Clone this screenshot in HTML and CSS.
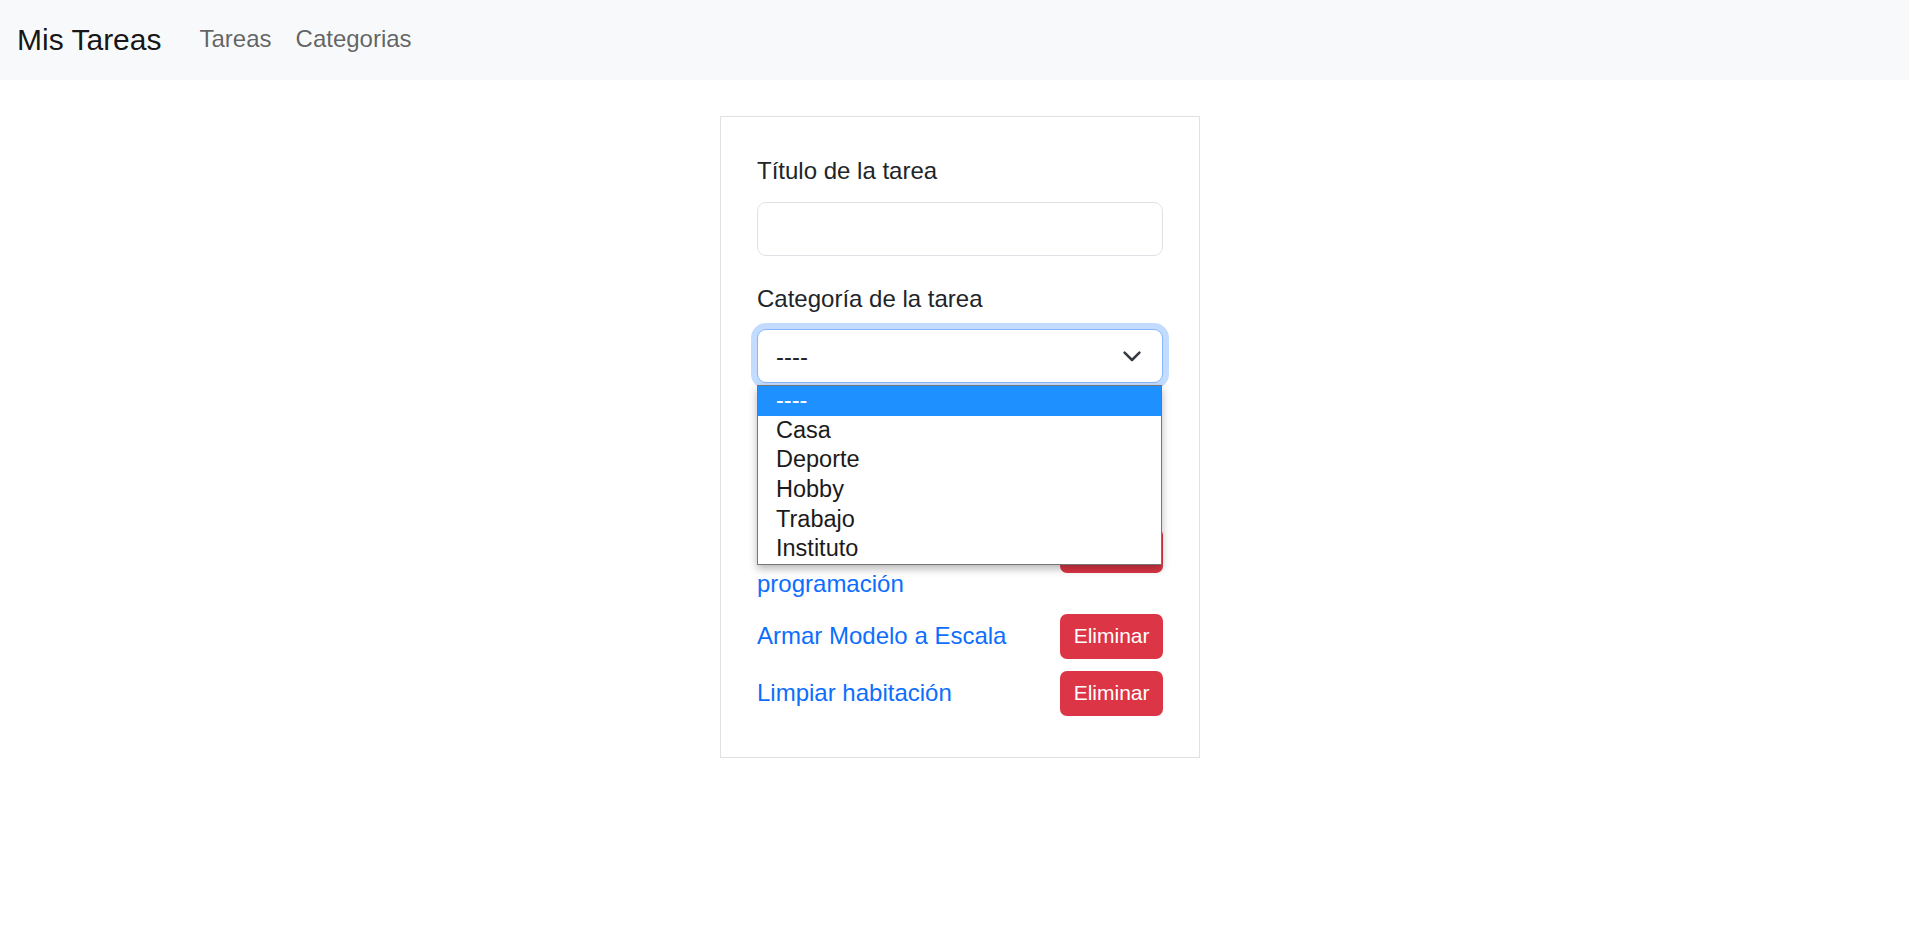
FILE: index.html
```html
<!DOCTYPE html>
<html lang="es">
<head>
<meta charset="utf-8">
<title>Mis Tareas</title>
<link rel="stylesheet" href="styles.css">
</head>
<body>
<nav class="navbar">
  <a class="brand" href="#">Mis Tareas</a>
  <ul class="nav-links">
    <li><a class="nav-link" href="#">Tareas</a></li>
    <li><a class="nav-link" href="#">Categorias</a></li>
  </ul>
</nav>
<main class="main">
  <section class="card">
    <form class="task-form">
      <div class="field field-title">
        <label class="field-label" for="titulo">Título de la tarea</label>
        <input class="form-control" id="titulo" type="text">
      </div>
      <div class="field">
        <label class="field-label" for="categoria">Categoría de la tarea</label>
        <div class="select-wrap">
          <select class="form-select" id="categoria">
            <option>----</option>
            <option>Casa</option>
            <option>Deporte</option>
            <option>Hobby</option>
            <option>Trabajo</option>
            <option>Instituto</option>
          </select>
          <svg class="chevron" width="18" height="11" viewBox="0 0 18 11" aria-hidden="true"><path d="M1.6 1.6 L9 9 L16.4 1.6" fill="none" stroke="#343a40" stroke-width="2.5" stroke-linecap="round" stroke-linejoin="round"/></svg>
          <ul class="dropdown">
            <li class="option selected">----</li>
            <li class="option">Casa</li>
            <li class="option">Deporte</li>
            <li class="option">Hobby</li>
            <li class="option">Trabajo</li>
            <li class="option">Instituto</li>
          </ul>
        </div>
      </div>
      <button class="btn btn-primary" type="button">Agregar</button>
    </form>
    <ul class="task-list">
      <li class="task">
        <a class="task-link" href="#">Aprender lenguaje de programación</a>
        <button class="btn btn-danger" type="button">Eliminar</button>
      </li>
      <li class="task">
        <a class="task-link" href="#">Armar Modelo a Escala</a>
        <button class="btn btn-danger" type="button">Eliminar</button>
      </li>
      <li class="task">
        <a class="task-link" href="#">Limpiar habitación</a>
        <button class="btn btn-danger" type="button">Eliminar</button>
      </li>
    </ul>
  </section>
</main>
</body>
</html>
```

FILE: styles.css
```css
* { box-sizing: border-box; }

html, body {
  margin: 0;
  padding: 0;
  background: #ffffff;
  font-family: "Liberation Sans", Arial, Helvetica, sans-serif;
  color: #212529;
}

.navbar {
  height: 80px;
  background: #f8f9fa;
  display: flex;
  align-items: center;
  padding: 0 17px;
}

.brand {
  font-size: 30px;
  line-height: 44px;
  color: rgba(0, 0, 0, 0.92);
  text-decoration: none;
  margin-right: 26px;
}

.nav-links {
  list-style: none;
  margin: 0 0 4px 0;
  padding: 0;
  display: flex;
}

.nav-link {
  display: block;
  font-size: 24px;
  line-height: 35px;
  padding: 0 12px;
  color: rgba(0, 0, 0, 0.62);
  text-decoration: none;
}

.main {
  display: flex;
  justify-content: center;
  padding: 36px 0 0 11px;
}

.card {
  width: 480px;
  border: 1px solid #dfe1e4;
  padding: 37px 36px 41px 36px;
  background: #fff;
}

.field-label {
  display: block;
  font-size: 24px;
  line-height: 34px;
  margin-bottom: 13px;
}

.field-title .field-label { margin-bottom: 14px; }

.field-title { margin-bottom: 26px; }

.form-control {
  display: block;
  width: 100%;
  height: 54px;
  border: 1px solid #dee2e6;
  border-radius: 9px;
  font-size: 24px;
  font-family: inherit;
  padding: 0 18px;
  background: #fff;
  outline: none;
}

.select-wrap {
  position: relative;
}

.form-select {
  display: block;
  width: 100%;
  height: 54px;
  -webkit-appearance: none;
  appearance: none;
  border: 1px solid #86b7fe;
  border-radius: 9px;
  box-shadow: 0 0 0 6px #c2dbfe;
  background: #fff;
  font-size: 24px;
  font-family: inherit;
  color: #212529;
  padding: 0 50px 0 18px;
  outline: none;
}

.chevron {
  position: absolute;
  right: 22px;
  top: 22px;
}

.dropdown {
  position: absolute;
  top: 56px;
  left: 0;
  width: 405px;
  margin: 0;
  padding: 0;
  list-style: none;
  background: #fff;
  border: 1px solid #767676;
  box-shadow: 0 4px 8px rgba(0, 0, 0, 0.28);
  z-index: 10;
}

.option {
  height: 29.67px;
  line-height: 29.67px;
  font-size: 23.5px;
  padding-left: 18px;
  color: #1b1b1b;
  white-space: nowrap;
}

.option.selected {
  background: #1e90ff;
  color: #fff;
}

.btn {
  font-family: inherit;
  border: none;
  cursor: pointer;
}

.btn-primary {
  margin-top: 23px;
  height: 45px;
  padding: 0 18px;
  font-size: 21px;
  border-radius: 7px;
  background: #0d6efd;
  color: #fff;
}

.task-list {
  list-style: none;
  margin: 77px 0 0 0;
  padding: 0;
}

.task {
  display: flex;
  justify-content: space-between;
  align-items: flex-start;
  gap: 12px;
  margin-bottom: 12px;
}

.task:last-child { margin-bottom: 0; }

.task-link {
  font-size: 24px;
  line-height: 34.3px;
  padding-top: 5px;
  color: #0d6efd;
  text-decoration: none;
}

.btn-danger {
  flex: none;
  height: 45px;
  padding: 0 13.5px;
  font-size: 21px;
  border-radius: 7px;
  background: #dc3545;
  color: #fff;
}
```
